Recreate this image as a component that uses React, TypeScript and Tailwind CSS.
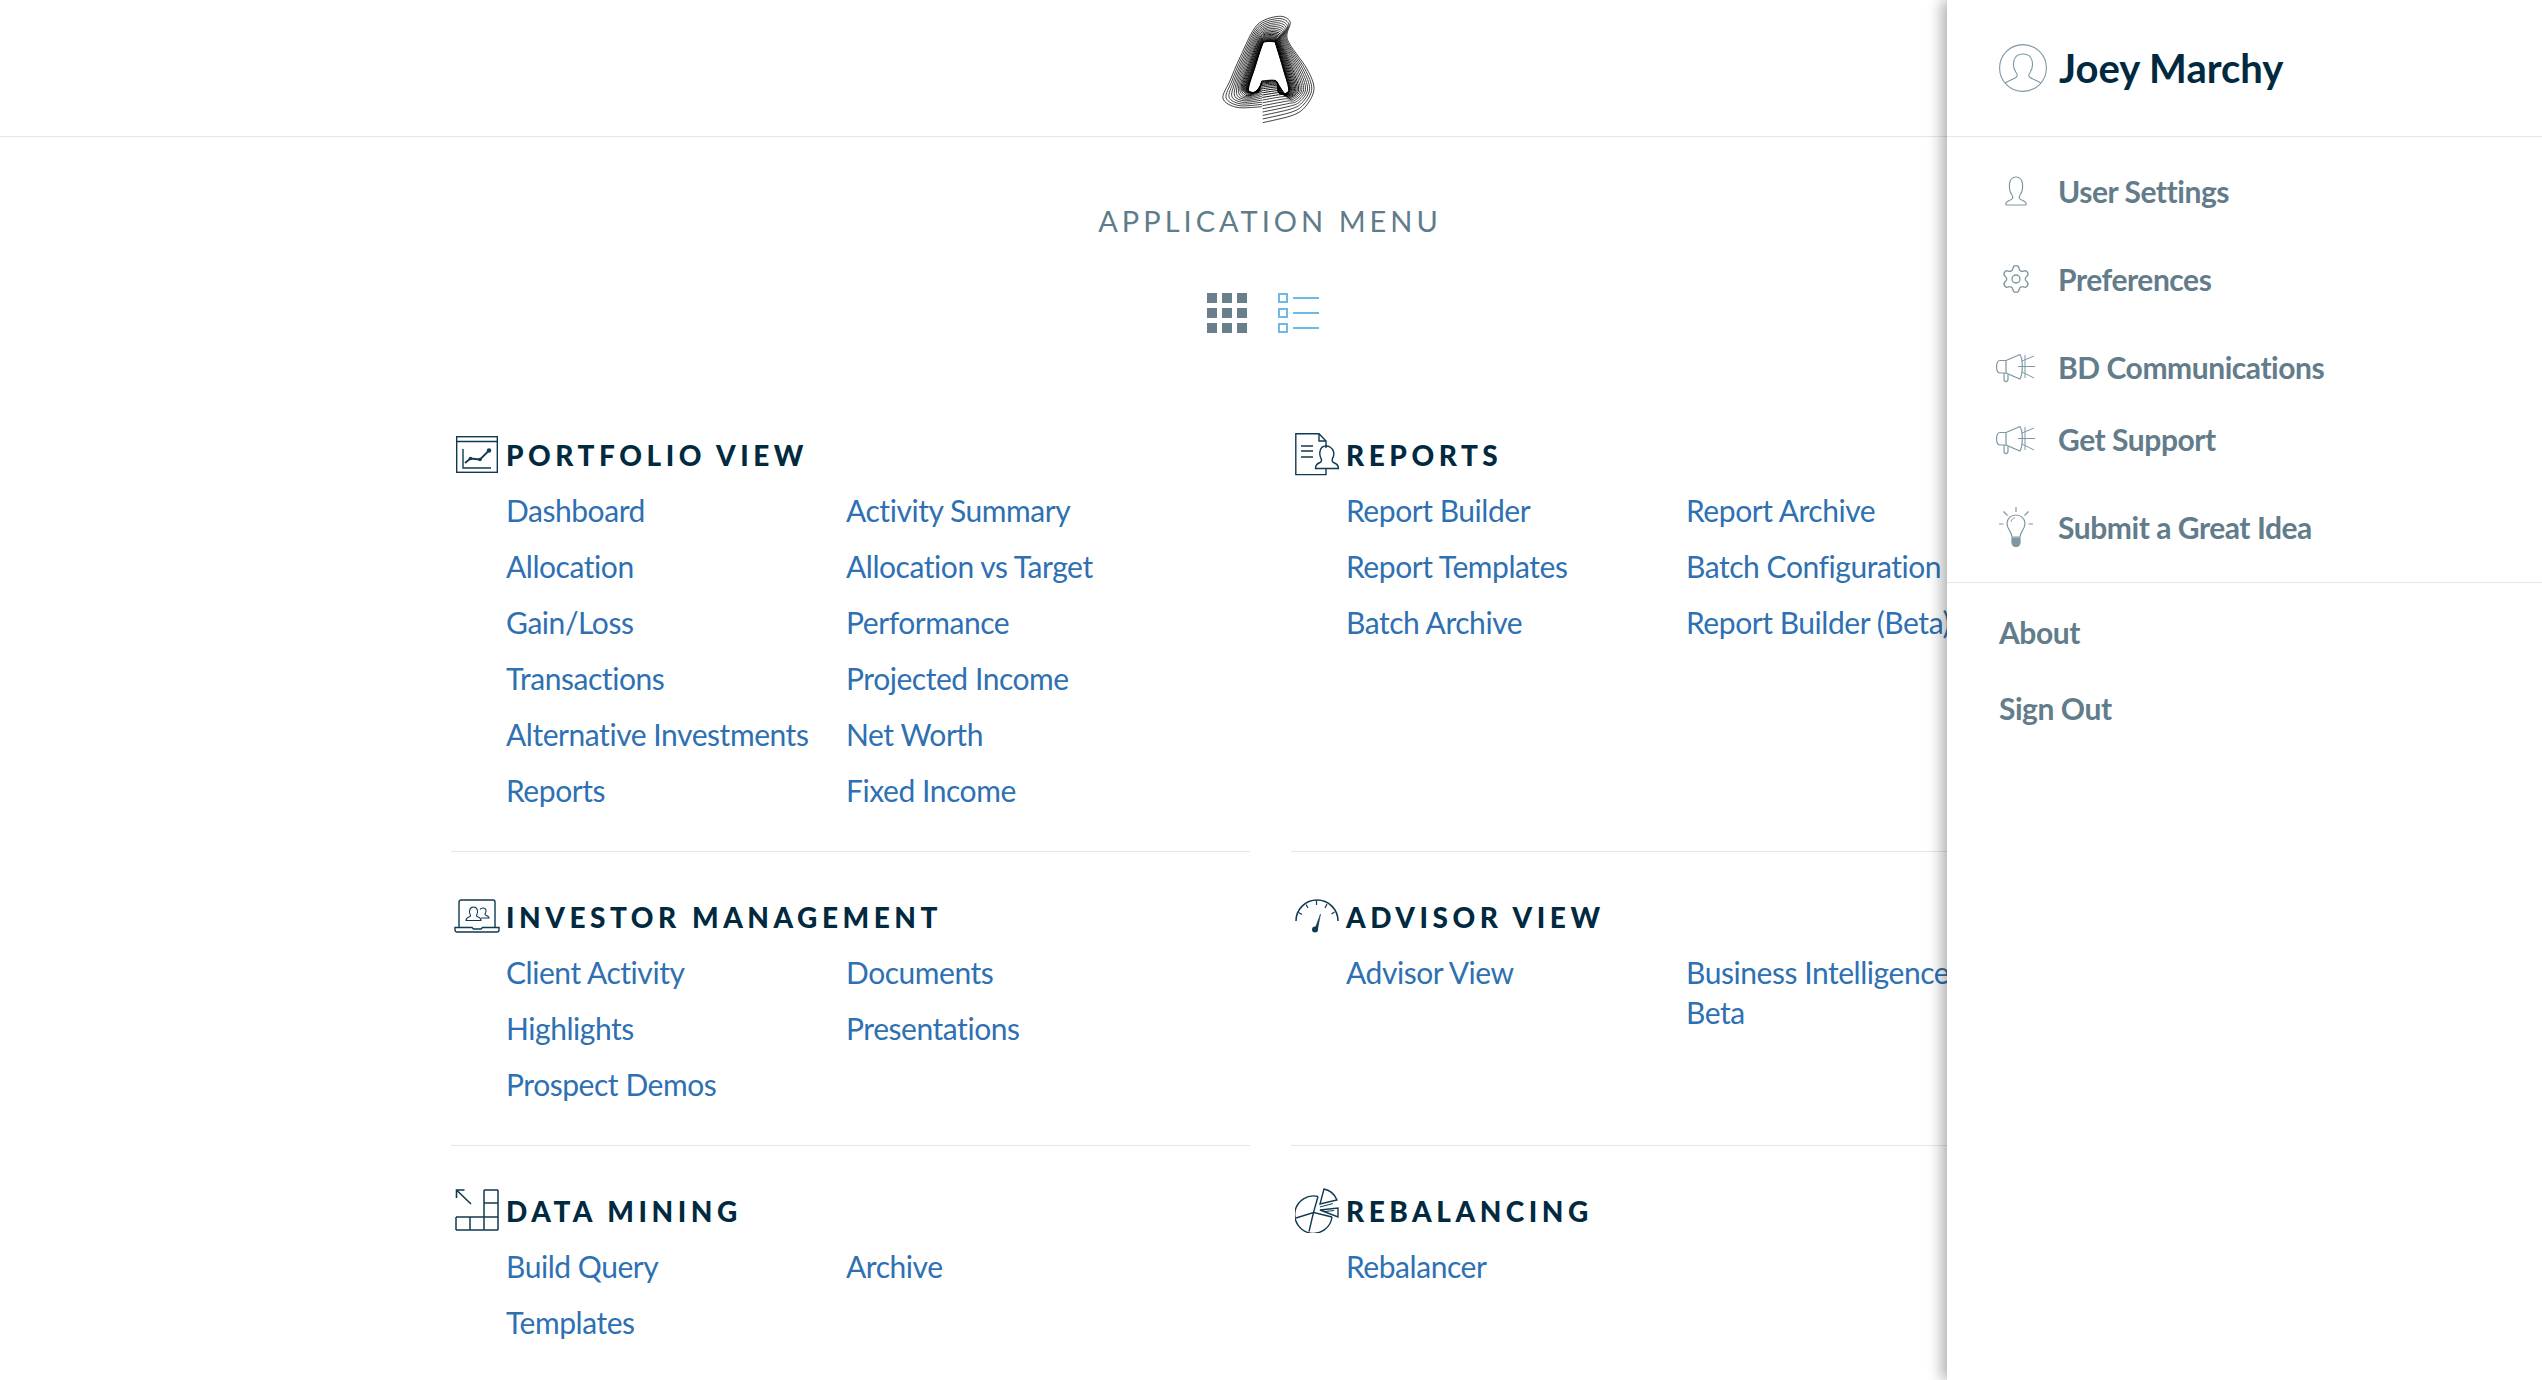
import React from 'react'
import { Settings } from 'lucide-react'

type Section = {
  title: string
  icon: React.ReactNode
  links: React.ReactNode[]
}

const INK = '#0f3a52'

// logo: ribbon of lines blended from the outer blob to the inner letter
const OUTER = [
  [338, 368], [430, 345], [470, 315], [492, 265], [470, 205], [412, 118], [420, 65], [385, 48],
  [320, 75], [270, 170], [240, 240], [218, 295], [260, 322], [335, 320],
]
const INNER = [
  [335, 242], [378, 242], [385, 278], [415, 272], [400, 210], [376, 130], [372, 125], [345, 125],
  [336, 135], [315, 200], [295, 270], [325, 275], [330, 262], [335, 242],
]

function ribbon(t: number) {
  const pts = OUTER.map((p, i) => [INNER[i][0] + (p[0] - INNER[i][0]) * t, INNER[i][1] + (p[1] - INNER[i][1]) * t])
  let d = `M${pts[0][0].toFixed(1)} ${pts[0][1].toFixed(1)}`
  for (let i = 0; i < pts.length - 1; i++) {
    const a = pts[Math.max(i - 1, 0)]
    const b = pts[i]
    const c = pts[i + 1]
    const e = pts[Math.min(i + 2, pts.length - 1)]
    const k = 0.16
    d += ` C${(b[0] + (c[0] - a[0]) * k).toFixed(1)} ${(b[1] + (c[1] - a[1]) * k).toFixed(1)} ${(c[0] - (e[0] - b[0]) * k).toFixed(1)} ${(c[1] - (e[1] - b[1]) * k).toFixed(1)} ${c[0].toFixed(1)} ${c[1].toFixed(1)}`
  }
  return d
}

const Logo = () => (
  <svg viewBox="200 30 310 350" className="w-[103px] h-[117px]" fill="none" stroke="#000" strokeWidth="2.8">
    {Array.from({ length: 20 }, (_, i) => (
      <path key={i} d={ribbon(Math.pow((i + 1) / 20, 1.8))} strokeOpacity={i < 12 ? 1 : 0.8} />
    ))}
  </svg>
)

const PortfolioIcon = () => (
  <svg viewBox="0 0 42 37" className="w-[42px] h-[37px]" fill="none" stroke={INK} strokeWidth="1.4">
    <rect x="0.7" y="0.7" width="40.6" height="35.6" />
    <path d="M1 5.5H41" />
    <path d="M7 13V32H35" />
    <path d="M9 27L14.5 22.5L24 23.5L33 14.5" strokeWidth="1.8" />
    <circle cx="14.5" cy="22.5" r="1.8" fill={INK} stroke="none" />
    <circle cx="24" cy="23.5" r="1.8" fill={INK} stroke="none" />
    <circle cx="33" cy="14.5" r="2.2" fill={INK} stroke="none" />
  </svg>
)

const ReportsIcon = () => (
  <svg viewBox="0 0 44 43" className="w-[44px] h-[43px]" fill="none" stroke={INK} strokeWidth="1.4">
    <path d="M31 15V8L24 0.8H0.8V41.6H31V36" />
    <path d="M24 1V8H31" />
    <path d="M6 13H18M6 18H18M6 24H18" strokeWidth="1.6" />
    <path d="M25 29.5C21 31 20.5 33 20.5 35.5H43.5C43.5 33 42.5 31 38.5 29.5C37 28.8 37 27 37.5 25.5C39 23 39 20.5 38.5 18.5C37.5 14.5 33.5 13 31 13C28 13 25.5 15 25 18.5C24.5 21 25 23.5 26 25.5C27 27 26.5 28.8 25 29.5Z" />
  </svg>
)

const InvestorIcon = () => (
  <svg viewBox="0 0 46 34" className="w-[46px] h-[34px]" fill="none" stroke={INK} strokeWidth="1.4">
    <path d="M5 28V3A2 2 0 0 1 7 1H39A2 2 0 0 1 41 3V28" />
    <path d="M1 28.5H18L19.5 30H27L28.5 28.5H45V31A2 2 0 0 1 43 33H3A2 2 0 0 1 1 31Z" />
    <path d="M12 21.5C12 19 13.5 18.5 16 17.5C16.8 17 16.6 16 16 15C15 13.5 15 8 19.5 8C24 8 24 13.5 23 15C22.4 16 22.2 17 23 17.5C25.5 18.5 27 19 27 21.5Z" strokeWidth="1.1" />
    <path d="M27 19H35C35 17.5 33.5 16.8 31.5 16C30.8 15.6 31 14.8 31.5 14C32.5 12.5 32.5 9 29 9C27.5 9 26.5 9.6 26 10.5" strokeWidth="1.1" />
  </svg>
)

const AdvisorIcon = () => (
  <svg viewBox="0 0 44 34" className="w-[44px] h-[34px]" fill="none" stroke={INK} strokeWidth="1.5">
    <path d="M1 22A21 21 0 0 1 43 22" />
    <path d="M3.5 13.5L7 15.5M11 5.5L13 9M21.5 1.5V6M32 5L30 9M39.5 13L36.5 15" strokeWidth="1.2" />
    <path d="M19.5 31L25.5 15L22.5 31Z" fill={INK} strokeWidth="0.5" />
    <circle cx="20" cy="30.5" r="3" fill={INK} stroke="none" />
  </svg>
)

const DataMiningIcon = () => (
  <svg viewBox="0 0 44 42" className="w-[44px] h-[42px]" fill="none" stroke={INK} strokeWidth="1.5">
    <path d="M1 28H43M1 41H43M1 28V41M15 28V41M29 1V41M43 1V41M29 1H43M29 14H43" />
    <path d="M16 15L1.5 1M1.5 9V1H9.5" strokeWidth="1.6" />
  </svg>
)

const RebalancingIcon = () => (
  <svg viewBox="0 0 44 45" className="w-[44px] h-[45px]" fill="none" stroke={INK} strokeWidth="1.4">
    <path d="M23 8.5A18.7 18.7 0 1 0 37 29" />
    <path d="M1 30L18.5 24.5L14 43.5M23 8.5L18.5 24.5L37 29" />
    <path d="M29 1L25 16L42 12A18 18 0 0 0 29 1Z" />
    <path d="M25 22L43 20V29Z" />
    <path d="M25 19L38 15.5M30 23.5L39 22.5" strokeWidth="1" />
  </svg>
)

const AvatarIcon = () => (
  <svg viewBox="0 0 48 48" className="w-12 h-12" fill="none" stroke="#7f97a3" strokeWidth="1.1">
    <circle cx="24" cy="24" r="23.4" />
    <path d="M6 39C11 36 15 35 17.5 33C18.5 32 18.5 30.5 17 28.5C14.5 25 14 20.5 15 16.5C16 12 20 10 24 10C28 10 32 12 33 16.5C34 20.5 33.5 25 31 28.5C29.5 30.5 29.5 32 30.5 33C33 35 37 36 42 39" />
  </svg>
)

const UserIcon = () => (
  <svg viewBox="0 0 22 30" className="w-[22px] h-[30px]" fill="none" stroke="#7f97a3" strokeWidth="1.2">
    <path d="M1 29H21V27.5C21 25 16 24.5 14.5 22.5C14 21.5 14 20.5 15 19C17 16.5 18 13 17.5 8C17 3.5 14.5 1 11 1C7.5 1 5 3.5 4.5 8C4 13 5 16.5 7 19C8 20.5 8 21.5 7.5 22.5C6 24.5 1 25 1 27.5Z" />
  </svg>
)

const MegaphoneIcon = () => (
  <svg viewBox="0 0 40 29" className="w-10 h-[29px]" fill="none" stroke="#7f97a3" strokeWidth="1.2">
    <path d="M10 7.5L24 1.5C27 6 27 21 24 26L10 20Z" />
    <path d="M10 7.5H4C1.5 7.5 0.6 10 0.6 13.7C0.6 17.5 1.5 20 4 20H10" />
    <path d="M8 20V26.5A2 2 0 0 0 12 26.5V21.5" />
    <path d="M22 13.5H39M26 8L38 3M26 19L38 25M29 2V25" strokeWidth="1" />
  </svg>
)

const BulbIcon = () => (
  <svg viewBox="0 0 34 40" className="w-[34px] h-10" fill="none" stroke="#7f97a3" strokeWidth="1.2">
    <path d="M17 0V5M4.5 4.5L8.5 8.5M29.5 4.5L25.5 8.5M0 17H4.5M29.5 17H34" />
    <path d="M13 30C13 25 8 22 8 16.5C8 11.5 12 8 17 8C22 8 26 11.5 26 16.5C26 22 21 25 21 30Z" />
    <path d="M12 15C12.5 12.5 14 11 16 10.8" strokeWidth="1" />
    <path d="M13 31H21V36C21 38 19 39.5 17 39.5C15 39.5 13 38 13 36Z" fill="#7f97a3" />
  </svg>
)

const sections: Section[] = [
  {
    title: 'PORTFOLIO VIEW',
    icon: <PortfolioIcon />,
    links: ['Dashboard', 'Activity Summary', 'Allocation', 'Allocation vs Target', 'Gain/Loss', 'Performance', 'Transactions', 'Projected Income', 'Alternative Investments', 'Net Worth', 'Reports', 'Fixed Income'],
  },
  {
    title: 'REPORTS',
    icon: <ReportsIcon />,
    links: ['Report Builder', 'Report Archive', 'Report Templates', 'Batch Configuration', 'Batch Archive', 'Report Builder (Beta)'],
  },
  {
    title: 'INVESTOR MANAGEMENT',
    icon: <InvestorIcon />,
    links: ['Client Activity', 'Documents', 'Highlights', 'Presentations', 'Prospect Demos'],
  },
  {
    title: 'ADVISOR VIEW',
    icon: <AdvisorIcon />,
    links: ['Advisor View', <>Business Intelligence<br />Beta</>],
  },
  {
    title: 'DATA MINING',
    icon: <DataMiningIcon />,
    links: ['Build Query', 'Archive', 'Templates'],
  },
  {
    title: 'REBALANCING',
    icon: <RebalancingIcon />,
    links: ['Rebalancer'],
  },
]

const MenuSection = ({ section, last }: { section: Section; last: boolean }) => (
  <div className={last ? 'pt-[44px]' : 'pt-[44px] pb-[41px] border-b border-[#e6e6e6]'}>
    <div className="flex items-center h-10">
      <div className="w-[55px] flex justify-center pr-[4px] shrink-0">{section.icon}</div>
      <h2 className="pt-px text-[28px] font-black tracking-[0.162em] text-[#012a40] whitespace-nowrap">{section.title}</h2>
    </div>
    <div className="grid grid-cols-[340px_1fr] gap-y-4 pl-[55px] mt-4">
      {section.links.map((link, i) => (
        <a key={i} className="text-[30px] leading-10 text-[#2e70b2] whitespace-nowrap tracking-[-0.015em]">{link}</a>
      ))}
    </div>
  </div>
)

const PanelItem = ({ icon, label, className }: { icon: React.ReactNode; label: string; className: string }) => (
  <div className={`flex items-center h-10 ${className}`}>
    <div className="w-10 flex justify-center shrink-0">{icon}</div>
    <span className="ml-[22px] text-[30px] font-bold text-[#627c8a] tracking-[-0.015em]">{label}</span>
  </div>
)

export default function App() {
  return (
    <div className="relative h-screen overflow-hidden bg-white" style={{ fontFamily: 'Lato, "Open Sans", sans-serif' }}>
      <header className="h-[137px] border-b border-[#e6e6e6] flex items-center justify-center pr-[6px]">
        <Logo />
      </header>

      <div className="flex flex-col items-center pr-[2px]">
        <h1 className="mt-[64px] text-[29px] leading-10 tracking-[0.138em] text-[#607c8a]">APPLICATION MENU</h1>
        <div className="flex items-start gap-[31px] mt-[52px] pr-[14px]">
          <div className="grid grid-cols-3 gap-[5px]">
            {Array.from({ length: 9 }, (_, i) => (
              <div key={i} className="w-[10px] h-[10px] bg-[#69808c]" />
            ))}
          </div>
          <div className="flex flex-col gap-[5px]">
            {[0, 1, 2].map((i) => (
              <div key={i} className="flex items-center gap-[5px]">
                <div className="w-[10px] h-[10px] border-2 border-[#6dbbe2]" />
                <div className="w-[26px] h-[2px] bg-[#6dbbe2]" />
              </div>
            ))}
          </div>
        </div>
      </div>

      <main className="grid grid-cols-[799px_799px] gap-x-[41px] pl-[451px] mt-[57px]">
        {sections.map((s, i) => (
          <MenuSection key={s.title} section={s} last={i >= 4} />
        ))}
      </main>

      {/* user panel slides over the menu */}
      <aside className="absolute top-0 right-0 bottom-0 w-[595px] bg-white shadow-[-5px_0_14px_rgba(0,0,0,0.32)]">
        <div className="h-[137px] border-b border-[#e6e6e6] flex items-center pl-[52px]">
          <AvatarIcon />
          <span className="ml-[12px] text-[40px] font-bold text-[#012a40]">Joey Marchy</span>
        </div>
        <div className="pl-[49px] pt-[34px] pb-[35px] border-b border-[#e6e6e6]">
          <PanelItem icon={<UserIcon />} label="User Settings" className="" />
          <PanelItem icon={<Settings size={32} strokeWidth={1} color="#7f97a3" />} label="Preferences" className="mt-12" />
          <PanelItem icon={<MegaphoneIcon />} label="BD Communications" className="mt-12" />
          <PanelItem icon={<MegaphoneIcon />} label="Get Support" className="mt-8" />
          <PanelItem icon={<BulbIcon />} label="Submit a Great Idea" className="mt-12" />
        </div>
        <div className="pl-[52px] pt-[29px] flex flex-col gap-9 text-[30px] leading-10 font-bold text-[#627c8a] tracking-[-0.015em]">
          <span>About</span>
          <span>Sign Out</span>
        </div>
      </aside>
    </div>
  )
}
